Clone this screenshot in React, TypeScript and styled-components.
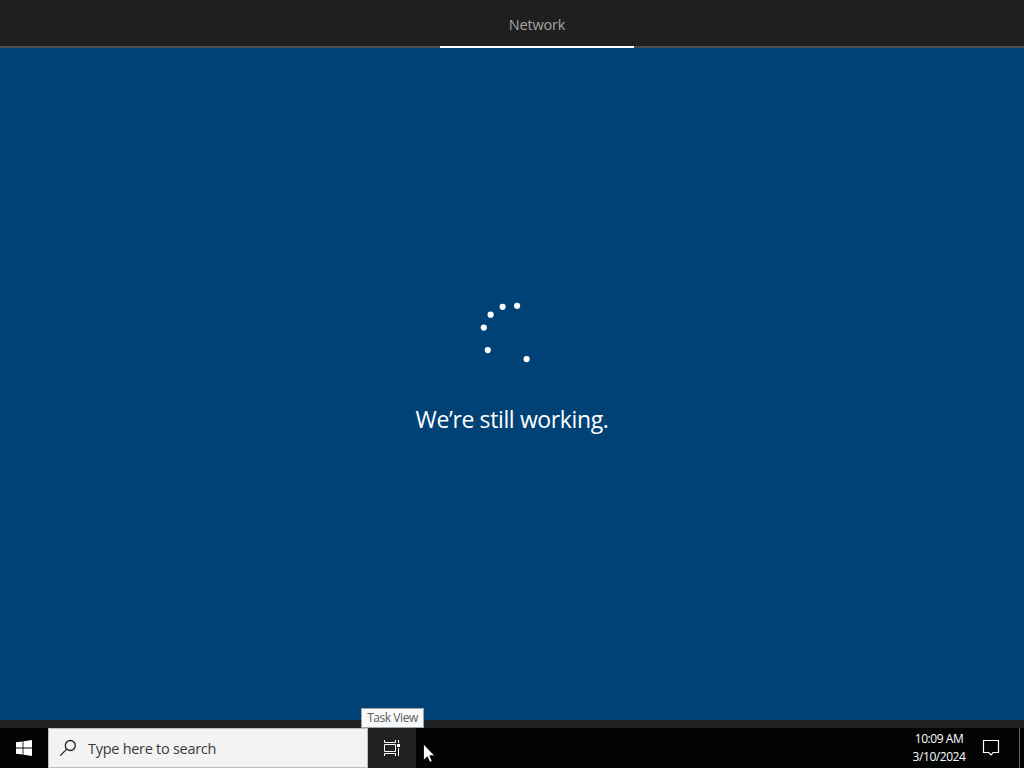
import React from "react";
import styled, { createGlobalStyle } from "styled-components";

const GlobalStyle = createGlobalStyle`
  * { box-sizing: border-box; }
  body { margin: 0; background: #000; overflow: hidden; }
`;

const Screen = styled.div`
  position: relative;
  width: 1024px;
  height: 768px;
  display: flex;
  flex-direction: column;
  overflow: hidden;
  background: #004275;
  color: #fff;
  font-family: "Open Sans", "Noto Sans", sans-serif;
  cursor: default;
`;

const StepBar = styled.header`
  height: 48px;
  flex: none;
  display: flex;
  padding-left: 440px;
  background: linear-gradient(#1f1f1f 46px, #4b4b4b 46px);
`;

const Step = styled.div`
  width: 194px;
  height: 48px;
  padding-top: 1px;
  border-bottom: 2px solid #fff;
  color: #a5a5a5;
  font-size: 14.5px;
  line-height: 47px;
  text-align: center;
  letter-spacing: -0.15px;
`;

const Stage = styled.main`
  flex: 1;
  display: flex;
  flex-direction: column;
  align-items: center;
  padding-top: 252px;
`;

const Spinner = styled.svg`
  width: 64px;
  height: 64px;
  flex: none;
`;

const Message = styled.h1`
  margin: 39px 0 0;
  font-size: 23px;
  font-weight: 400;
  line-height: 32px;
  letter-spacing: -0.38px;
  white-space: nowrap;
`;

const BottomEdge = styled.div`
  height: 8px;
  flex: none;
  background: #202122;
`;

const Taskbar = styled.footer`
  height: 40px;
  flex: none;
  display: flex;
  background: #030404;
`;

const TaskButton = styled.button<{ $hovered?: boolean }>`
  width: 48px;
  height: 40px;
  padding: 0;
  border: 0;
  display: flex;
  align-items: center;
  justify-content: center;
  color: #fff;
  background: ${(p) => (p.$hovered ? "#202020" : "transparent")};
`;

const SearchBox = styled.div`
  width: 320px;
  height: 40px;
  display: flex;
  align-items: center;
  gap: 11px;
  padding-left: 10px;
  border: 1px solid #bdbdbd;
  background: #f3f3f3;
  color: #3a3a3a;
  font-size: 14.5px;
  letter-spacing: -0.28px;
`;

const Tray = styled.div`
  margin-left: auto;
  display: flex;
`;

const Clock = styled.div`
  width: 60px;
  padding-top: 2px;
  font-size: 12px;
  line-height: 18px;
  letter-spacing: -0.45px;
  text-align: center;
  white-space: nowrap;
`;

const NotificationButton = styled(TaskButton)`
  width: 50px;
  padding-right: 6px;
`;

const ShowDesktop = styled.div`
  width: 5px;
  border-left: 1px solid #666;
`;

const Tooltip = styled.div`
  position: absolute;
  left: 361px;
  top: 708px;
  width: 63px;
  height: 20px;
  border: 1px solid #a0a5a9;
  background: #f8f9fa;
  color: #5c5c5c;
  font-size: 12px;
  line-height: 18px;
  letter-spacing: -0.45px;
  text-align: center;
  white-space: nowrap;
`;

const Pointer = styled.svg`
  position: absolute;
  left: 423px;
  top: 743px;
  width: 12px;
  height: 20px;
`;

const dots = [
  [37.1, 5.8],
  [22.6, 6.8],
  [10.6, 14.7],
  [3.8, 27.6],
  [7.8, 50.1],
  [46.6, 59.1],
];

export default function App() {
  return (
    <>
      <GlobalStyle />
      <Screen>
        <StepBar>
          <Step>Network</Step>
        </StepBar>
        <Stage>
          <Spinner viewBox="0 0 64 64" fill="#fff">
            {dots.map(([x, y]) => (
              <circle key={x} cx={x} cy={y} r="3.1" />
            ))}
          </Spinner>
          <Message>We’re still working.</Message>
        </Stage>
        <BottomEdge />
        <Taskbar>
          <TaskButton aria-label="Start">
            <svg width="16" height="16" viewBox="0 0 16 16" fill="currentColor">
              <path d="M0 2.3 6.6 1.4V7.6H0zM7.4 1.3 16 0V7.6H7.4zM0 8.4H6.6V14.6L0 13.7zM7.4 8.4H16V16L7.4 14.7z" />
            </svg>
          </TaskButton>
          <SearchBox>
            <svg width="18" height="18" viewBox="0 0 18 18" fill="none" stroke="#222" strokeWidth="1.3">
              <circle cx="11.3" cy="6.5" r="5" />
              <path d="M7.7 10.1 1.2 16.6" />
            </svg>
            <span>Type here to search</span>
          </SearchBox>
          <TaskButton $hovered aria-label="Task View">
            <svg width="16" height="16" viewBox="0 0 16 16" fill="none" stroke="currentColor">
              <path d="M.5 0V2.5H11.5V0M.5 4.5H11.5V11.5H.5zM.5 16V13.5H11.5V16M14.5 0V3M14.5 8V16" />
              <path d="M13 4H16V7H13z" fill="currentColor" stroke="none" />
            </svg>
          </TaskButton>
          <Tray>
            <Clock>
              <div>10:09 AM</div>
              <div>3/10/2024</div>
            </Clock>
            <NotificationButton aria-label="Notifications">
              <svg width="18" height="18" viewBox="0 0 18 18" fill="none" stroke="currentColor" strokeWidth="1.2">
                <path d="M1.5 1.5H16.5V13.5H11.2L9 15.8 6.8 13.5H1.5z" />
              </svg>
            </NotificationButton>
            <ShowDesktop />
          </Tray>
        </Taskbar>
        <Tooltip>Task View</Tooltip>
        <Pointer viewBox="0 0 12 20">
          <path d="M.5 1V17.3L4.3 13.7 6.8 19.3 9.2 18.2 6.8 12.8H11.8z" fill="#fff" stroke="#000" strokeWidth=".8" />
        </Pointer>
      </Screen>
    </>
  );
}
